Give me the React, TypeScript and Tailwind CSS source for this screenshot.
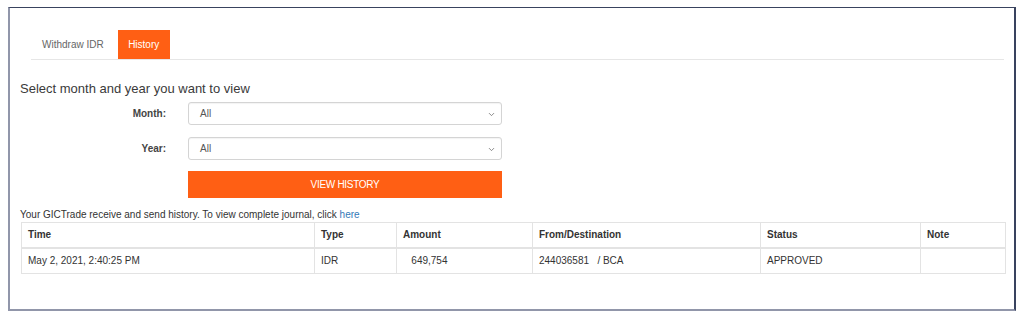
import { ChevronDown } from 'lucide-react'

const font = { fontFamily: '"Liberation Sans", Arial, sans-serif' }

function Select({ value }: { value: string }) {
  return (
    <div className="relative flex h-[23px] w-[314px] items-center rounded-[3px] border border-[#d4d4d4] bg-white pl-[11px] text-[10px] text-[#555] shadow-[inset_0_1px_1px_rgba(0,0,0,0.05)]">
      {value}
      <ChevronDown className="absolute right-[5px] top-[7px] h-[9px] w-[9px] text-[#666]" strokeWidth={2} />
    </div>
  )
}

export default function App() {
  return (
    <div className="h-[319px] w-[1024px] bg-white pl-2 pt-[7px]" style={font}>
      <div className="h-[304px] w-[1008px] border-t border-r-2 border-l-2 border-b-2 border-t-[#39435f] border-r-[#39435f] border-l-[#9196aa] border-b-[#9196aa] px-[10px] pt-[22px] text-[#333]">
        {/* Tabs */}
        <div className="ml-[11px] flex h-[30px] border-b border-[#e6e6e6] text-[10px]">
          <div className="flex items-center px-[11px] text-[#666]">Withdraw IDR</div>
          <div className="ml-[3px] flex w-[52px] items-center justify-center bg-[#ff5f14] text-white">History</div>
        </div>

        <div className="mt-[21px] text-[13px] leading-[16px] text-[#3a3a3a]">Select month and year you want to view</div>

        {/* Filters */}
        <div className="mt-[5px] grid grid-cols-[146px_314px] items-center gap-x-[22px] gap-y-[12px] text-[10px]">
          <div className="text-right font-bold text-[#444]">Month:</div>
          <Select value="All" />
          <div className="text-right font-bold text-[#444]">Year:</div>
          <Select value="All" />
          <div />
          <button className="-mt-px h-[27px] w-[314px] bg-[#ff5f14] text-[10px] uppercase tracking-[-0.3px] text-white">
            View History
          </button>
        </div>

        <div className="mt-[11px] text-[10px] leading-[12px] text-[#333]">
          Your GICTrade receive and send history. To view complete journal, click{' '}
          <span className="text-[#3479b7]">here</span>
        </div>

        {/* Table */}
        <table className="ml-px mt-px w-[984px] table-fixed border-collapse text-[10px] text-[#333]">
          <colgroup>
            <col className="w-[293px]" />
            <col className="w-[82px]" />
            <col className="w-[136px]" />
            <col className="w-[228px]" />
            <col className="w-[160px]" />
            <col className="w-[85px]" />
          </colgroup>
          <thead>
            <tr className="h-[25px]">
              {['Time', 'Type', 'Amount', 'From/Destination', 'Status', 'Note'].map((h) => (
                <th key={h} className="border border-b-2 border-[#e3e3e3] px-[6px] text-left font-semibold">
                  {h}
                </th>
              ))}
            </tr>
          </thead>
          <tbody>
            <tr className="h-[26px]">
              <td className="border border-[#e3e3e3] px-[6px]">May 2, 2021, 2:40:25 PM</td>
              <td className="border border-[#e3e3e3] px-[6px]">IDR</td>
              <td className="whitespace-pre border border-[#e3e3e3] px-[6px]">{'   649,754'}</td>
              <td className="whitespace-pre border border-[#e3e3e3] px-[6px]">{'244036581   / BCA'}</td>
              <td className="border border-[#e3e3e3] px-[6px]">APPROVED</td>
              <td className="border border-[#e3e3e3] px-[6px]"></td>
            </tr>
          </tbody>
        </table>
      </div>
    </div>
  )
}
